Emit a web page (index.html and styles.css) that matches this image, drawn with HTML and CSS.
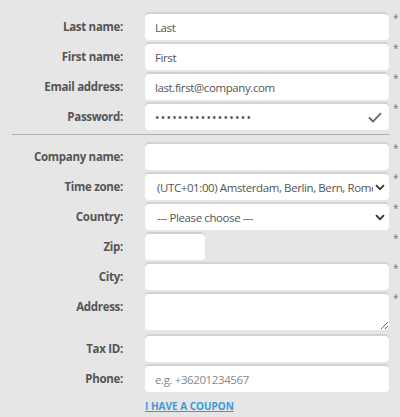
FILE: index.html
```html
<!DOCTYPE html>
<html>
<head>
<meta charset="utf-8">
<link rel="stylesheet" href="styles.css">
</head>
<body>
<form class="form">
  <div class="row"><label class="lbl">Last name:</label><div class="field"><input class="inp" type="text" value="Last"></div><span class="req">*</span></div>
  <div class="row"><label class="lbl">First name:</label><div class="field"><input class="inp" type="text" value="First"></div><span class="req">*</span></div>
  <div class="row"><label class="lbl">Email address:</label><div class="field"><input class="inp" type="text" value="last.first@company.com"></div><span class="req">*</span></div>
  <div class="row"><label class="lbl">Password:</label><div class="field"><input class="inp pw" type="password" value="aaaaaaaaaaaaaaaaa"><svg class="check" width="14" height="11" viewBox="0 0 14 11"><path d="M1 5.5 L5 9.5 L13 1.2" fill="none" stroke="#666" stroke-width="1.8"/></svg></div><span class="req">*</span></div>
  <hr class="sep">
  <div class="row"><label class="lbl">Company name:</label><div class="field"><input class="inp" type="text"></div><span class="req">*</span></div>
  <div class="row"><label class="lbl">Time zone:</label><div class="field"><div class="sel"><span class="seltxt">(UTC+01:00) Amsterdam, Berlin, Bern, Rome, Stockholm, Vienna</span><svg class="chev" width="10" height="7" viewBox="0 0 10 7"><path d="M1 1.2 L5 5.2 L9 1.2" fill="none" stroke="#333" stroke-width="1.8"/></svg></div></div><span class="req">*</span></div>
  <div class="row"><label class="lbl">Country:</label><div class="field"><div class="sel"><span class="seltxt">--- Please choose ---</span><svg class="chev" width="10" height="7" viewBox="0 0 10 7"><path d="M1 1.2 L5 5.2 L9 1.2" fill="none" stroke="#333" stroke-width="1.8"/></svg></div></div><span class="req">*</span></div>
  <div class="row"><label class="lbl">Zip:</label><div class="field"><input class="inp zip" type="text"></div><span class="req">*</span></div>
  <div class="row"><label class="lbl">City:</label><div class="field"><input class="inp" type="text"></div><span class="req">*</span></div>
  <div class="row tall"><label class="lbl">Address:</label><div class="field"><textarea class="inp ta"></textarea></div><span class="req">*</span></div>
  <div class="row"><label class="lbl">Tax ID:</label><div class="field"><input class="inp" type="text"></div><span class="req"></span></div>
  <div class="row"><label class="lbl">Phone:</label><div class="field"><input class="inp" type="text" placeholder="e.g. +36201234567"></div><span class="req"></span></div>
  <div class="row link-row"><span class="lbl"></span><a class="coupon" href="#">I HAVE A COUPON</a></div>
</form>
</body>
</html>
```
FILE: styles.css
```css
html, body {
  margin: 0;
  padding: 0;
  background: #e6e6e6;
}
body {
  font-family: "Open Sans", "Liberation Sans", sans-serif;
  width: 400px;
  height: 417px;
  overflow: hidden;
}
.form {
  padding: 12px 0 0 0;
  display: flex;
  flex-direction: column;
  gap: 4px;
}
.row {
  display: grid;
  grid-template-columns: 145px 244px 11px;
  height: 26px;
}
.row.tall {
  height: 38px;
}
.lbl {
  text-align: right;
  padding-right: 22px;
  padding-top: 2px;
  font-size: 11.5px;
  font-weight: 700;
  letter-spacing: -0.3px;
  color: #555;
  line-height: 26px;
  white-space: nowrap;
}
.field {
  position: relative;
  height: 100%;
}
.inp {
  box-sizing: border-box;
  width: 100%;
  height: 100%;
  margin: 0;
  border: none;
  border-radius: 4px;
  background: #fff;
  box-shadow: inset 0 2px 0 #d2d2d2;
  padding: 3px 10px 0 10px;
  font-family: "Open Sans", "Liberation Sans", sans-serif;
  font-size: 11.5px;
  letter-spacing: -0.4px;
  color: #555;
  outline: none;
}
.inp::placeholder {
  color: #888;
}
.pw {
  font-size: 12px;
  letter-spacing: 1.2px;
}
.zip {
  width: 60px;
}
.ta {
  resize: vertical;
  display: block;
}
.check {
  position: absolute;
  right: 7px;
  top: 10px;
}
.sel {
  box-sizing: border-box;
  height: 100%;
  border-radius: 4px;
  background: #fff;
  box-shadow: inset 0 2px 0 #d2d2d2;
  display: flex;
  align-items: center;
  padding: 3px 0 0 12px;
  gap: 2px;
}
.seltxt {
  flex: 1;
  min-width: 0;
  overflow: hidden;
  white-space: nowrap;
  text-overflow: clip;
  font-size: 11.5px;
  letter-spacing: -0.4px;
  color: #555;
}
.chev {
  flex: none;
  margin-right: 4px;
}
.req {
  font-size: 10px;
  color: #777;
  padding-left: 4px;
  line-height: 12px;
}
.sep {
  margin: 2px 11px 3px 12px;
  border: none;
  border-top: 1px solid #b0b0b0;
  height: 0;
}
.link-row {
  height: 20px;
  margin-top: 2px;
}
.coupon {
  font-size: 10px;
  font-weight: 700;
  color: #3a9ad9;
  text-decoration: underline;
  line-height: 20px;
}
```
